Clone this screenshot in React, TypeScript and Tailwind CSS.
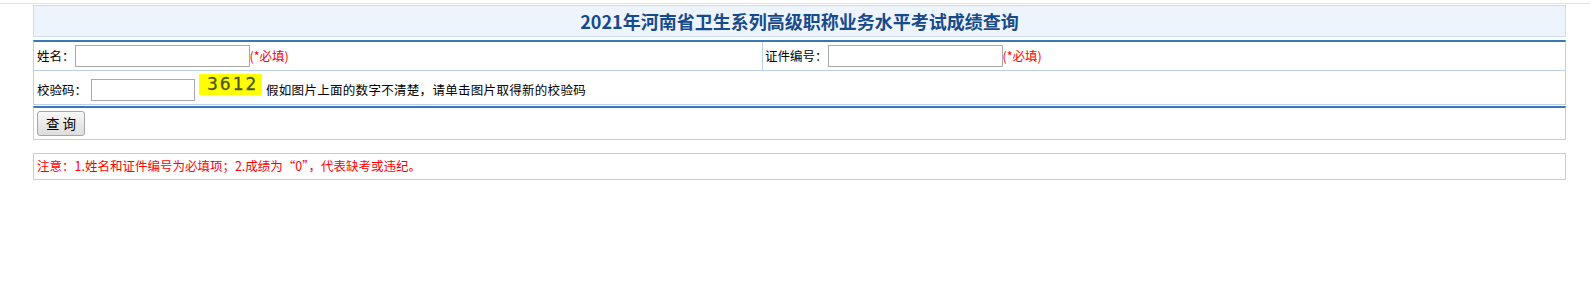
import React from 'react';

const border = 'border-[#b9d0ee]';

export default function App() {
  return (
    <div
      className="w-[1590px] h-[293px] bg-white pt-[3px] text-[12.5px] text-black"
      style={{ fontFamily: '"Noto Sans CJK SC", "Noto Sans", sans-serif' }}
    >
      <div className="border-t border-[#e3e3e3]" />

      <div className="ml-[33px] w-[1533px] mt-[1px]">
        {/* Title bar */}
        <div className="h-[32px] border border-[#cddcf0] bg-[#edf4fc] flex items-center justify-center text-[18px] font-bold text-[#164a8c] leading-none">
          2021年河南省卫生系列高级职称业务水平考试成绩查询
        </div>

        {/* Form fields */}
        <div className={`mt-[3px] border-x ${border} border-t-2 border-t-[#3a77ba]`}>
          <div className={`h-[29px] flex border-b ${border}`}>
            <div className={`w-[729px] border-r ${border} px-[3px] flex items-center`}>
              <span>姓名：</span>
              <input className="w-[175px] h-[22px] border border-[#a9a9a9] bg-white outline-none" />
              <span className="text-[#ff0000]">(*必填)</span>
            </div>
            <div className="flex-1 px-[2px] flex items-center">
              <span>证件编号：</span>
              <input className="w-[175px] h-[22px] border border-[#a9a9a9] bg-white outline-none" />
              <span className="text-[#ff0000]">(*必填)</span>
            </div>
          </div>
          <div className={`h-[34px] flex items-start px-[3px] border-b ${border}`}>
            <span className="mt-[8px] leading-[22px]">校验码：</span>
            <input className="mt-[8px] ml-[4px] w-[104px] h-[22px] border border-[#a9a9a9] bg-white outline-none" />
            <div
              className="mt-[3px] ml-[4px] w-[63px] h-[21px] shrink-0 overflow-hidden bg-[#ffff00] text-[#4a5526] text-[17px] tracking-[2px] leading-[21px] pl-[8px] whitespace-nowrap cursor-pointer"
              style={{ fontFamily: '"DejaVu Sans", sans-serif', WebkitTextStroke: '0.3px #4a5526' }}
            >
              3612
            </div>
            <span className="mt-[8px] ml-[4px] leading-[22px] tracking-[0.3px]">假如图片上面的数字不清楚，请单击图片取得新的校验码</span>
          </div>
        </div>

        {/* Submit */}
        <div className={`mt-[1px] h-[34px] border-x border-b ${border} border-t-2 border-t-[#3a77ba] px-[3px]`}>
          <button className="mt-[3px] w-[48px] h-[25px] border border-[#a5a5a5] rounded-[3px] bg-gradient-to-b from-[#f7f7f7] to-[#dddddd] text-[13.5px] leading-none">
            查 询
          </button>
        </div>

        {/* Notes */}
        <div className={`mt-[13px] h-[27px] border ${border} px-[3px] flex items-center text-[#ff0000] text-[12.5px]`}>
          注意：1.姓名和证件编号为必填项；2.成绩为“0”，代表缺考或违纪。
        </div>
      </div>
    </div>
  );
}
